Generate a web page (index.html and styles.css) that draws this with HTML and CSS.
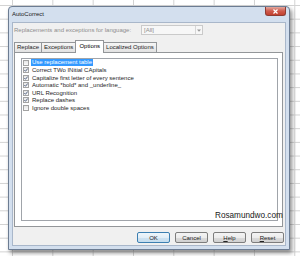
FILE: index.html
```html
<!DOCTYPE html>
<html>
<head>
<meta charset="utf-8">
<link rel="stylesheet" href="styles.css">
</head>
<body>
<div class="dialog">
  <div class="titlebar">
    <span class="title">AutoCorrect</span>
    <span class="close"><svg width="7" height="5" viewBox="0 0 7 5"><path d="M1.5 0.5 L5.5 4.5 M5.5 0.5 L1.5 4.5" stroke="#fff" stroke-width="1.2"/></svg></span>
  </div>
  <div class="client">
    <div class="langrow">
      <span class="label">Replacements and exceptions for language:</span>
      <span class="combo"><span class="combo-text">[All]</span><span class="combo-btn"><svg width="4" height="3" viewBox="0 0 4 3"><path d="M0 0.5 L4 0.5 L2 2.8 Z" fill="#9a9a9a"/></svg></span></span>
    </div>
    <div class="tabs">
      <span class="tab">Replace</span>
      <span class="tab">Exceptions</span>
      <span class="tab active">Options</span>
      <span class="tab">Localized Options</span>
    </div>
    <div class="panel">
      <div class="list">
        <div class="item"><span class="cb"></span><span class="sel">Use replacement table</span></div>
        <div class="item"><span class="cb"><svg width="4" height="4" viewBox="0 0 4 4"><path d="M0.3 2 L1.5 3.3 L3.7 0.5" stroke="#4a5a7a" stroke-width="0.9" fill="none"/></svg></span><span class="txt">Correct TWo INitial CApitals</span></div>
        <div class="item"><span class="cb"><svg width="4" height="4" viewBox="0 0 4 4"><path d="M0.3 2 L1.5 3.3 L3.7 0.5" stroke="#4a5a7a" stroke-width="0.9" fill="none"/></svg></span><span class="txt">Capitalize first letter of every sentence</span></div>
        <div class="item"><span class="cb"><svg width="4" height="4" viewBox="0 0 4 4"><path d="M0.3 2 L1.5 3.3 L3.7 0.5" stroke="#4a5a7a" stroke-width="0.9" fill="none"/></svg></span><span class="txt">Automatic *bold* and _underline_</span></div>
        <div class="item"><span class="cb"><svg width="4" height="4" viewBox="0 0 4 4"><path d="M0.3 2 L1.5 3.3 L3.7 0.5" stroke="#4a5a7a" stroke-width="0.9" fill="none"/></svg></span><span class="txt">URL Recognition</span></div>
        <div class="item"><span class="cb"><svg width="4" height="4" viewBox="0 0 4 4"><path d="M0.3 2 L1.5 3.3 L3.7 0.5" stroke="#4a5a7a" stroke-width="0.9" fill="none"/></svg></span><span class="txt">Replace dashes</span></div>
        <div class="item"><span class="cb"></span><span class="txt">Ignore double spaces</span></div>
      </div>
    </div>
    <div class="buttons">
      <span class="btn default">OK</span>
      <span class="btn">Cancel</span>
      <span class="btn"><u>H</u>elp</span>
      <span class="btn"><u>R</u>eset</span>
    </div>
  </div>
  <span class="watermark">Rosamundwo.com</span>
</div>
</body>
</html>
```
FILE: styles.css
```css
html, body {
  margin: 0;
  padding: 0;
}
body {
  width: 300px;
  height: 256px;
  overflow: hidden;
  background-color: #fff;
  background-image:
    linear-gradient(to right, #d2d2d2 1px, transparent 1px),
    linear-gradient(to bottom, #d2d2d2 1px, transparent 1px);
  background-size: 40.33px 13.7px;
  background-position: 12px 5px;
  font-family: "Liberation Sans", Arial, sans-serif;
  font-size: 6px;
  color: #1e1e1e;
  padding-top: 6px;
  box-sizing: border-box;
}
.dialog {
  position: relative;
  margin-left: 8px;
  width: 282px;
  height: 244px;
  box-sizing: border-box;
  border: 1px solid #6c7c92;
  border-radius: 4px 4px 0 0;
  background: #d3dfee;
  padding: 0 3px 3px;
  display: flex;
  flex-direction: column;
  box-shadow: 2px 3px 4px rgba(0, 0, 0, 0.45);
}
.titlebar {
  height: 15px;
  display: flex;
  justify-content: space-between;
  align-items: flex-start;
}
.title {
  line-height: 15px;
  color: #1a1a1a;
}
.close {
  width: 21px;
  height: 9px;
  box-sizing: border-box;
  border: 1px solid #8e3b32;
  border-top: none;
  border-radius: 0 0 3px 3px;
  background: linear-gradient(#e3a99f, #cf5a4c 50%, #c2402f);
  display: flex;
  align-items: center;
  justify-content: center;
}
.close svg { display: block; }
.client {
  flex: 1;
  background: #f0f0f0;
  border: 1px solid #a9b7ca;
  display: flex;
  flex-direction: column;
}
.langrow {
  display: flex;
  align-items: center;
  height: 10px;
  margin-top: 2px;
  padding-left: 1px;
}
.label {
  width: 127px;
  color: #8e8e8e;
}
.combo {
  width: 62px;
  height: 10px;
  box-sizing: border-box;
  border: 1px solid #cacaca;
  background: #f7f7f7;
  display: flex;
  align-items: center;
  justify-content: space-between;
}
.combo-text {
  color: #8e8e8e;
  padding-left: 2px;
}
.combo-btn {
  width: 7px;
  height: 8px;
  box-sizing: border-box;
  border-left: 1px solid #d6d6d6;
  display: flex;
  align-items: center;
  justify-content: center;
}
.combo-btn svg { display: block; }
.tabs {
  display: flex;
  align-items: flex-end;
  height: 12px;
  margin-top: 5px;
  padding-left: 1px;
  position: relative;
  z-index: 1;
}
.tab {
  height: 10px;
  box-sizing: border-box;
  border: 1px solid #939699;
  border-bottom: none;
  margin-right: -1px;
  padding: 0 2px;
  line-height: 9px;
  background: linear-gradient(#f6f6f6, #e2e2e2);
  white-space: nowrap;
}
.tab.active {
  height: 13px;
  margin-bottom: -1px;
  line-height: 11px;
  background: #fff;
  padding: 0 3px;
  color: #000;
}
.panel {
  margin-left: 1px;
  width: 269px;
  height: 175px;
  box-sizing: border-box;
  border: 1px solid #939699;
  background: #fff;
  padding: 5px 4px 5px 6px;
}
.list {
  height: 163px;
  box-sizing: border-box;
  border: 1px solid #a0a4aa;
  background: #fff;
}
.item {
  display: flex;
  align-items: center;
  height: 7.5px;
  white-space: nowrap;
}
.cb {
  width: 4px;
  height: 4px;
  border: 1px solid #a3a3a3;
  background: linear-gradient(#e6e6e6, #fafafa);
  margin-left: 1px;
  margin-right: 2px;
  flex: none;
}
.cb svg { display: block; }
.txt {
  padding-left: 1px;
}
.sel {
  background: #3399ff;
  color: #fff;
  padding: 0 1px;
  line-height: 7px;
}
.buttons {
  display: flex;
  justify-content: flex-end;
  gap: 5px;
  margin-top: 5px;
  padding-right: 1px;
}
.btn {
  width: 33px;
  height: 11px;
  box-sizing: border-box;
  border: 1px solid #7d7d7d;
  border-radius: 2px;
  background: linear-gradient(#f4f4f4, #ececec 50%, #dcdcdc 50%, #d0d0d0);
  display: flex;
  align-items: center;
  justify-content: center;
  color: #222;
}
.btn.default {
  border-color: #3c7fb1;
  background: linear-gradient(#eef6fb, #e2eef7 50%, #cfe3f1 50%, #c4dcee);
}
.watermark {
  position: absolute;
  left: 206px;
  top: 205px;
  font-size: 8.2px;
  line-height: 8px;
  color: #1a1a1a;
  white-space: nowrap;
}
```
